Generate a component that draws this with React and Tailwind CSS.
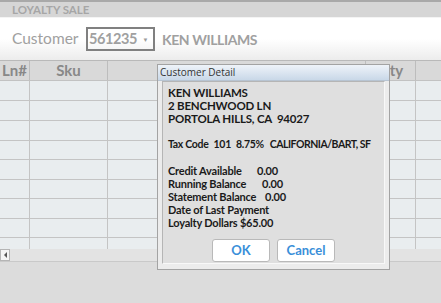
import React from "react";

const rowHeights = [20, 20, 20, 19, 20, 19, 20, 19, 11];

const lines = [
  "KEN WILLIAMS",
  "2 BENCHWOOD LN",
  "PORTOLA HILLS, CA  94027",
];

const balances = [
  ["Credit Available", "0.00", "w-[89px]"],
  ["Running Balance", "0.00", "w-[94px]"],
  ["Statement Balance", "0.00", "w-[97px]"],
];

function CustomerDetail() {
  return (
    <div className="absolute left-[157px] top-[64px] w-[233px] h-[206px] bg-[#ececec] border border-[#a3a3a3] flex flex-col">
      <div className="h-[16px] bg-gradient-to-b from-[#eef3f9] to-[#c9d8e8] border-b border-[#b7c4d2] flex items-center px-[2px] text-[10px] text-[#333] font-['Open_Sans',sans-serif]">
        Customer Detail
      </div>
      <div className="flex-1 mx-[4px] mb-[5px] bg-[#dfdfdf] border-l border-t border-[#b5b5b5] border-r border-b border-r-[#f8f8f8] border-b-[#f8f8f8] px-[5px] pt-[4px] text-[11px] font-bold text-[#1a1a1a] leading-[13px] font-['Lato',sans-serif] tracking-[-0.2px]">
        {lines.map((l) => (
          <div key={l} className="whitespace-pre text-[11.5px]">{l}</div>
        ))}
        <div className="mt-[13px] flex whitespace-nowrap text-[10.5px] tracking-[-0.3px]">
          <span className="shrink-0">Tax Code</span>
          <span className="shrink-0 ml-[5px]">101</span>
          <span className="shrink-0 ml-[5px]">8.75%</span>
          <span className="shrink-0 ml-[6px] tracking-[-0.5px]">CALIFORNIA/BART, SF</span>
        </div>
        <div className="mt-[13px]">
          {balances.map(([label, val, w]) => (
            <div key={label} className="flex whitespace-nowrap">
              <span className={`${w} shrink-0`}>{label}</span>
              <span>{val}</span>
            </div>
          ))}
          <div>Date of Last Payment</div>
          <div>Loyalty Dollars $65.00</div>
        </div>
        <div className="flex gap-[7px] mt-[10px] ml-[44px] tracking-normal">
          <button className="w-[58px] h-[23px] bg-white border border-[#b9b9b9] rounded-[3px] text-[#3a8fd9] text-[13px] font-bold">OK</button>
          <button className="w-[58px] h-[23px] bg-white border border-[#b9b9b9] rounded-[3px] text-[#3a8fd9] text-[13px] font-bold">Cancel</button>
        </div>
      </div>
    </div>
  );
}

export default function App() {
  return (
    <div className="relative w-[441px] h-[303px] overflow-hidden bg-[#dcdcdc] font-['Lato',sans-serif]">
      {/* title strip */}
      <div className="h-[18px] bg-[#d6d6d6] border-t-2 border-[#a9a9a9] border-b border-b-[#f4f4f4] flex items-center px-[12px] text-[11.5px] font-bold text-[#a6a6a6]">
        LOYALTY SALE
      </div>
      {/* customer header */}
      <div className="h-[42px] bg-gradient-to-b from-white via-white to-[#ececec] flex items-center px-[12px] text-[15.5px] text-[#a0a0a0]">
        <span className="w-[74px]">Customer</span>
        <div className="w-[69px] h-[24px] border-2 border-[#808080] flex items-center pl-[1px] font-bold text-[14.5px] tracking-[-0.4px]">
          <span>561235</span>
          <span className="ml-auto mr-[5px] text-[6px] text-[#9a9a9a]">▼</span>
        </div>
        <span className="ml-[7px] font-bold text-[14px] tracking-[-0.4px]">KEN WILLIAMS</span>
      </div>
      {/* grid */}
      <div className="flex flex-col border-t border-[#b9b9b9] bg-[#e9edef]">
        <div className="h-[20px] flex bg-[#d9d9d9] border-b border-[#c2c2c2] text-[15px] font-bold text-[#888] leading-none">
          <div className="w-[30px] border-r border-[#bdbdbd] flex items-center pl-[2px]">Ln#</div>
          <div className="w-[78px] border-r border-[#bdbdbd] flex items-center justify-center">Sku</div>
          <div className="w-[258px] border-r border-[#bdbdbd]"></div>
          <div className="w-[50px] border-r border-[#bdbdbd] flex items-center justify-center">Qty</div>
          <div className="flex-1"></div>
        </div>
        {rowHeights.map((h, i) => (
          <div
            key={i}
            className="flex border-b border-[#c4c4c4] last:border-b-0"
            style={{ height: h }}
          >
            <div className="w-[30px] border-r border-[#c4c4c4]"></div>
            <div className="w-[78px] border-r border-[#c4c4c4]"></div>
            <div className="w-[308px] border-r border-[#c4c4c4]"></div>
            <div className="flex-1"></div>
          </div>
        ))}
      </div>
      {/* horizontal scrollbar */}
      <div className="h-[13px] bg-[#e3e3e3] border-b border-[#c9c9c9] flex items-center">
        <div className="w-[10px] h-[12px] bg-[#f4f4f4] border border-[#b5b5b5] flex items-center justify-center">
          <div className="w-0 h-0 border-y-[3px] border-y-transparent border-r-[3px] border-r-[#555]"></div>
        </div>
      </div>
      <CustomerDetail />
    </div>
  );
}
